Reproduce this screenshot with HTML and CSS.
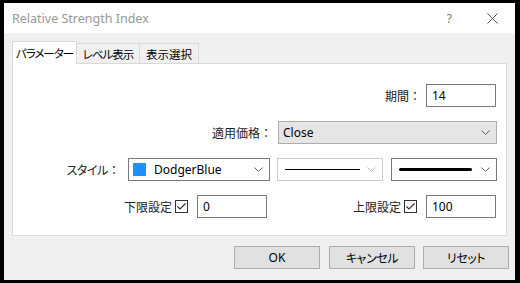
FILE: index.html
```html
<!DOCTYPE html>
<html lang="ja">
<head>
<meta charset="utf-8">
<title>Relative Strength Index</title>
<link rel="stylesheet" href="styles.css">
</head>
<body>
<div class="dialog">
  <div class="titlebar">
    <span class="title">Relative Strength Index</span>
    <span class="help">?</span>
    <svg class="close" width="11" height="11" viewBox="0 0 11 11"><path d="M0.5 0.5 L10.5 10.5 M10.5 0.5 L0.5 10.5" stroke="#555" stroke-width="1" fill="none"/></svg>
  </div>
  <div class="content">
    <div class="tabs">
      <div class="tab active">パラメーター</div>
      <div class="tab t2">レベル表示</div>
      <div class="tab t3">表示選択</div>
    </div>
    <div class="panel">
      <div class="row">
        <span class="label">期間：</span>
        <div class="input w70">14</div>
      </div>
      <div class="row">
        <span class="label">適用価格：</span>
        <div class="select gray w219"><span>Close</span>
          <svg class="chev" width="9" height="5" viewBox="0 0 9 5"><polyline points="0.5,0.5 4.5,4.5 8.5,0.5" fill="none" stroke="#606060"/></svg>
        </div>
      </div>
      <div class="row">
        <span class="label"><span class="kana">スタイル</span>：</span>
        <div class="select w142 dark"><span class="swatch"></span><span>DodgerBlue</span>
          <svg class="chev" width="9" height="5" viewBox="0 0 9 5"><polyline points="0.5,0.5 4.5,4.5 8.5,0.5" fill="none" stroke="#606060"/></svg>
        </div>
        <div class="select w106 disabled"><span class="line thin"></span>
          <svg class="chev" width="9" height="5" viewBox="0 0 9 5"><polyline points="0.5,0.5 4.5,4.5 8.5,0.5" fill="none" stroke="#c0c0c0"/></svg>
        </div>
        <div class="select w106 dark"><span class="line thick"></span>
          <svg class="chev" width="9" height="5" viewBox="0 0 9 5"><polyline points="0.5,0.5 4.5,4.5 8.5,0.5" fill="none" stroke="#606060"/></svg>
        </div>
      </div>
      <div class="row">
        <span class="label">下限設定</span>
        <span class="check"><svg width="13" height="13" viewBox="0 0 13 13"><rect x="0.5" y="0.5" width="12" height="12" fill="#fff" stroke="#333"/><polyline points="2.5,6.5 5,9 10.5,3.5" fill="none" stroke="#333" stroke-width="1.2"/></svg></span>
        <div class="input w70">0</div>
        <span class="label lab2">上限設定</span>
        <span class="check"><svg width="13" height="13" viewBox="0 0 13 13"><rect x="0.5" y="0.5" width="12" height="12" fill="#fff" stroke="#333"/><polyline points="2.5,6.5 5,9 10.5,3.5" fill="none" stroke="#333" stroke-width="1.2"/></svg></span>
        <div class="input w70">100</div>
      </div>
    </div>
    <div class="buttons">
      <div class="btn">OK</div>
      <div class="btn kana">キャンセル</div>
      <div class="btn kana">リセット</div>
    </div>
  </div>
</div>
</body>
</html>
```
FILE: styles.css
```css
html, body {
  margin: 0;
  padding: 0;
  background: #000;
  width: 520px;
  height: 283px;
  overflow: hidden;
  font-family: "Noto Sans", "Noto Sans CJK JP", sans-serif;
  font-size: 12px;
  color: #000;
}
.kana {
  font-feature-settings: "palt";
  letter-spacing: -0.4px;
}
.dialog {
  margin: 3px 0 0 4px;
  width: 511px;
  height: 277px;
  background: #f0f0f0;
  display: flex;
  flex-direction: column;
}
.titlebar {
  height: 30px;
  background: #fff;
  display: flex;
  align-items: center;
  padding-left: 8px;
}
.title {
  color: #999;
  font-size: 12.5px;
  flex: 1;
}
.help {
  color: #777;
  font-size: 12px;
  margin-right: 35px;
}
.close {
  margin-right: 17px;
}
.content {
  padding: 8px 6px 0 8px;
  display: flex;
  flex-direction: column;
}
.tabs {
  display: flex;
  height: 22px;
  align-items: flex-end;
}
.tab {
  height: 20px;
  box-sizing: border-box;
  border: 1px solid #d9d9d9;
  border-bottom: none;
  border-left: none;
  background: #f0f0f0;
  font-family: "Noto Sans CJK JP", sans-serif;
  font-size: 11.5px;
  font-feature-settings: "palt";
  letter-spacing: -1px;
  display: flex;
  align-items: center;
  justify-content: center;
  white-space: nowrap;
}
.tab.active {
  height: 23px;
  border-left: 1px solid #d9d9d9;
  background: #fff;
  width: 65px;
  margin-bottom: -1px;
  position: relative;
  z-index: 1;
}
.tab.t2 { width: 63px; }
.tab.t3 { width: 59px; letter-spacing: 0; }
.panel {
  width: 495px;
  height: 173px;
  box-sizing: border-box;
  background: #fff;
  border: 1px solid #d9d9d9;
  padding: 20px 10px 0 0;
  display: flex;
  flex-direction: column;
  gap: 14px;
}
.row {
  display: flex;
  justify-content: flex-end;
  align-items: center;
  height: 23px;
}
.label {
  font-family: "Noto Sans CJK JP", sans-serif;
  font-size: 12px;
  color: #222;
  margin-right: 5px;
  white-space: nowrap;
}
.lab2 { margin-left: 86px; }
.input {
  height: 23px;
  box-sizing: border-box;
  border: 1px solid #7a7a7a;
  background: #fff;
  padding: 0 5px;
  display: flex;
  align-items: center;
  font-size: 12px;
}
.w70 { width: 70px; }
.check {
  display: flex;
  margin: 0 9px 0 -2px;
}
.select {
  height: 23px;
  box-sizing: border-box;
  border: 1px solid #adadad;
  display: flex;
  align-items: center;
  padding: 0 6px 0 4px;
  font-size: 12px;
  margin-left: 7px;
}
.select .chev { margin-left: auto; }
.gray { background: #e5e5e5; padding-left: 4px; margin-right: -1px; }
.dark { border-color: #7a7a7a; background: #fff; }
.disabled { border-color: #cccccc; background: #fff; }
.w219 { width: 219px; margin-left: 1px; }
.w142 { width: 142px; margin-left: 3px; }
.w106 { width: 106px; }
.select.w106.dark { margin-left: 8px; margin-right: -1px; }
.swatch {
  width: 13px;
  height: 13px;
  background: #1e90ff;
  margin-right: 8px;
}
.line {
  display: block;
  height: 1px;
  background: #000;
  width: 75px;
  margin-left: 3px;
}
.line.thick {
  height: 3px;
  border-radius: 2px;
  width: 73px;
  margin-left: 3px;
}
.buttons {
  display: flex;
  justify-content: flex-end;
  margin-top: 10px;
  gap: 8px;
}
.btn {
  width: 86px;
  height: 23px;
  box-sizing: border-box;
  border: 1px solid #adadad;
  background: #e1e1e1;
  display: flex;
  align-items: center;
  justify-content: center;
  font-family: "Noto Sans", "Noto Sans CJK JP", sans-serif;
  font-size: 12px;
}
.btn:first-child { margin-right: 1px; }
```
